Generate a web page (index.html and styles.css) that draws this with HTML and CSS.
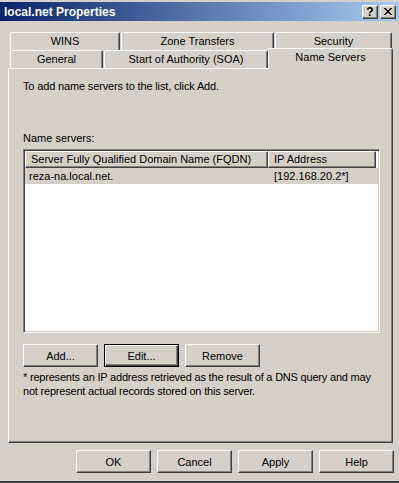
FILE: index.html
```html
<!DOCTYPE html>
<html lang="en">
<head>
    <meta charset="UTF-8">
    <title>local.net Properties</title>
    <link rel="stylesheet" href="styles.css">
</head>
<body>
    <div class="window">
        <div class="titlebar">
            <span class="title">local.net Properties</span>
            <div class="caption-buttons">
                <span class="cap-btn">?</span>
                <span class="cap-btn">
                    <svg width="8" height="7" viewBox="0 0 8 7" shape-rendering="crispEdges">
                        <path d="M0 0h2v1H0zM6 0h2v1H6zM1 1h2v1H1zM5 1h2v1H5zM2 2h4v1H2zM3 3h2v1H3zM2 4h4v1H2zM1 5h2v1H1zM5 5h2v1H5zM0 6h2v1H0zM6 6h2v1H6z" fill="#000"/>
                    </svg>
                </span>
            </div>
        </div>

        <div class="tabs">
            <div class="tab-row">
                <div class="tab tab-wins">WINS</div>
                <div class="tab tab-zone">Zone Transfers</div>
                <div class="tab tab-security">Security</div>
            </div>
            <div class="tab-row front">
                <div class="tab tab-general">General</div>
                <div class="tab tab-soa">Start of Authority (SOA)</div>
                <div class="tab tab-ns selected">Name Servers</div>
            </div>
        </div>

        <div class="panel">
            <div class="intro">To add name servers to the list, click Add.</div>
            <div class="label">Name servers:</div>

            <div class="listview">
                <div class="lv-header">
                    <div class="lv-col col-fqdn">Server Fully Qualified Domain Name (FQDN)</div>
                    <div class="lv-col col-ip">IP Address</div>
                </div>
                <div class="lv-row">
                    <div class="lv-cell col-fqdn">reza-na.local.net.</div>
                    <div class="lv-cell col-ip">[192.168.20.2*]</div>
                </div>
            </div>

            <div class="button-row">
                <button class="btn">Add...</button>
                <button class="btn default">Edit...</button>
                <button class="btn">Remove</button>
            </div>

            <div class="note">* represents an IP address retrieved as the result of a DNS query and may<br>not represent actual records stored on this server.</div>
        </div>

        <div class="footer">
            <button class="btn">OK</button>
            <button class="btn">Cancel</button>
            <button class="btn">Apply</button>
            <button class="btn">Help</button>
        </div>
    </div>
</body>
</html>
```

FILE: styles.css
```css
body {
    margin: 0;
    background-color: #d4d0c8;
    font-family: "Liberation Sans", Arial, sans-serif;
    font-size: 11px;
    color: #000;
}

.window {
    height: 483px;
    box-sizing: border-box;
    padding-top: 2px;
    border-bottom: 2px solid #404040;
}

/* title bar */
.titlebar {
    height: 19px;
    display: flex;
    align-items: center;
    justify-content: space-between;
    padding: 0 3px 0 4px;
    background: linear-gradient(to right, #0a246a, #a6caf0);
    color: #fff;
    font-weight: bold;
}

.title {
    font-size: 12px;
}

.caption-buttons {
    display: flex;
    gap: 2px;
}

.cap-btn {
    width: 16px;
    height: 14px;
    box-sizing: border-box;
    display: flex;
    align-items: center;
    justify-content: center;
    background-color: #d4d0c8;
    border: 1px solid;
    border-color: #fff #404040 #404040 #fff;
    box-shadow: inset -1px -1px #808080;
    color: #000;
    font-size: 12px;
    font-weight: bold;
}

/* tabs */
.tabs {
    margin-top: 11px;
    padding-left: 10px;
}

.tab-row {
    display: flex;
    align-items: flex-end;
    gap: 1px;
    height: 18px;
}

.tab {
    height: 18px;
    box-sizing: border-box;
    background-color: #d4d0c8;
    border-top: 1px solid #fff;
    border-left: 1px solid #fff;
    border-right: 1px solid #404040;
    box-shadow: inset -1px 0 #808080;
    border-radius: 2px 2px 0 0;
    text-align: center;
    line-height: 17px;
    white-space: nowrap;
}

.tab-wins { width: 110px; }
.tab-zone { width: 153px; }
.tab-security { width: 117px; }
.tab-general { width: 93px; }
.tab-soa { width: 164px; }

.tab.selected {
    width: 125px;
    height: 21px;
    margin-left: -1px;
    margin-bottom: -1px;
    line-height: 17px;
    padding-bottom: 3px;
    position: relative;
    z-index: 1;
}

/* tab page */
.panel {
    margin-left: 8px;
    width: 385px;
    height: 375px;
    box-sizing: border-box;
    border: 1px solid;
    border-color: #fff #404040 #404040 #fff;
    box-shadow: inset -1px -1px #808080;
    padding: 11px 14px 0;
}

.intro,
.label {
    line-height: 13px;
}

.intro {
    letter-spacing: -0.15px;
}

.label {
    margin-top: 39px;
}

.listview {
    margin-top: 4px;
    width: 357px;
    height: 184px;
    box-sizing: border-box;
    padding: 1px;
    background-color: #fff;
    border: 1px solid;
    border-color: #808080 #fff #fff #808080;
    box-shadow: inset 1px 1px #404040, inset -1px -1px #d4d0c8;
}

.lv-header,
.lv-row {
    display: flex;
}

.lv-col {
    height: 17px;
    box-sizing: border-box;
    padding-left: 5px;
    background-color: #d4d0c8;
    border: 1px solid;
    border-color: #fff #404040 #404040 #fff;
    box-shadow: inset -1px -1px #808080;
    line-height: 14px;
    white-space: nowrap;
    overflow: hidden;
}

.lv-row {
    height: 16px;
    background-color: #d4d0c8;
    line-height: 16px;
}

.lv-cell {
    box-sizing: border-box;
    white-space: nowrap;
}

.lv-cell.col-fqdn { padding-left: 4px; }
.lv-cell.col-ip { padding-left: 6px; }

.col-fqdn { width: 243px; }
.col-ip { width: 108px; }

/* buttons */
.button-row {
    display: flex;
    gap: 6px;
    margin-top: 11px;
}

.btn {
    width: 75px;
    height: 23px;
    box-sizing: border-box;
    padding: 0;
    background-color: #d4d0c8;
    border: 1px solid;
    border-color: #fff #404040 #404040 #fff;
    box-shadow: inset -1px -1px #808080;
    font: inherit;
    color: #000;
}

.btn.default {
    border-color: #000;
    box-shadow: inset 1px 1px #fff, inset -1px -1px #404040, inset -2px -2px #808080;
}

.note {
    margin-top: 3px;
    line-height: 14px;
    letter-spacing: -0.2px;
    white-space: nowrap;
}

.footer {
    display: flex;
    justify-content: flex-end;
    gap: 6px;
    margin-top: 7px;
    padding-right: 5px;
}
```
